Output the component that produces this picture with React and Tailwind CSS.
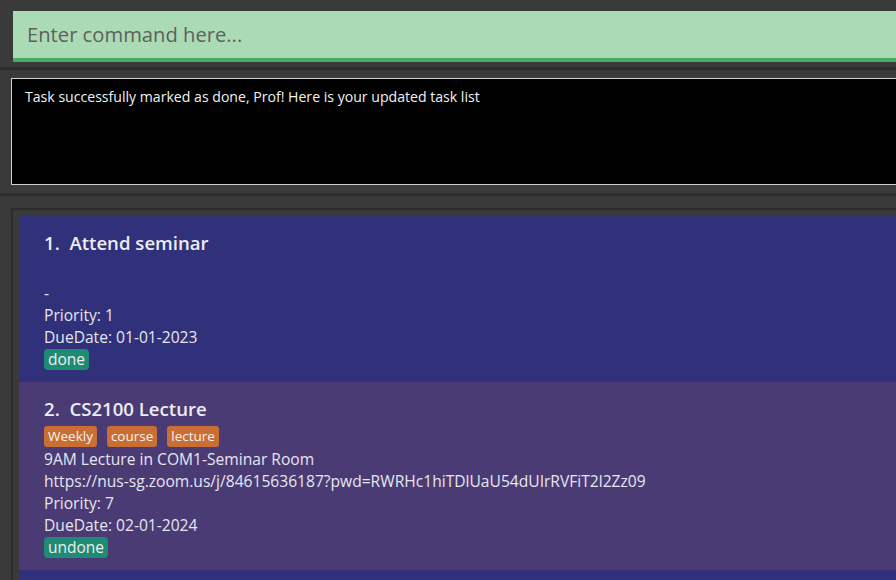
import React from "react";

const FONT = { fontFamily: '"Open Sans", "Noto Sans", sans-serif' };

function Tag({ children }) {
  return (
    <span className="inline-flex h-[21px] items-center rounded-[3px] bg-[#c96f33] px-[4px] text-[13.5px] text-[#f3f3f3]">
      {children}
    </span>
  );
}

function Status({ children }) {
  return (
    <div className="mt-[1px] flex h-[21px]">
      <span className="inline-flex h-[21px] items-center rounded-[4px] bg-[#1f8b74] px-[4px] text-[15.5px] text-[#eeeeee]">
        {children}
      </span>
    </div>
  );
}

function Card({ bg, index, title, tags, lines, status }) {
  return (
    <div className={`${bg} px-[25px] pt-[13px] pb-[12px] text-[#e6e6ee]`}>
      <div className="h-[28px] text-[18.6px] font-semibold leading-[28px] text-[#ececf4]">
        {index}.&nbsp;&nbsp;{title}
      </div>
      <div className="mt-[3px] mb-[1px] flex h-[21px] gap-[10px]">
        {tags.map((t) => (
          <Tag key={t}>{t}</Tag>
        ))}
      </div>
      {lines.map((l, i) => (
        <div key={i} className="h-[22px] whitespace-nowrap text-[15.6px] leading-[22px]">
          {l}
        </div>
      ))}
      <Status>{status}</Status>
    </div>
  );
}

export default function App() {
  return (
    <div className="h-[580px] w-[896px] overflow-hidden bg-[#3a3a3a]" style={FONT}>
      {/* command box */}
      <div className="pt-[11px] pl-[13px]">
        <div className="flex h-[51px] items-center border-b-[4px] border-[#4cab5e] bg-[#abdbb5] pl-[14px] text-[20.2px] text-[#5c625c]">
          Enter command here...
        </div>
      </div>
      <div className="mt-[5px] h-[3px] bg-[#2e2e2e]" />
      {/* result display */}
      <div className="pt-[8px] pl-[11px]">
        <div className="h-[107px] border border-r-0 border-[#cfcfcf] bg-black px-[13px] pt-[8px] text-[14.1px] leading-[20px] text-[#f2f2f2]">
          Task successfully marked as done, Prof! Here is your updated task list
        </div>
      </div>
      <div className="mt-[8px] h-[3px] bg-[#2e2e2e]" />
      {/* list panel */}
      <div className="mt-[12px] ml-[11px] h-[400px] border-t-[2px] border-l-[2px] border-[#2c2c2c] pt-[6px] pl-[6px]">
        <Card
          bg="bg-[#30317a]"
          index={1}
          title="Attend seminar"
          tags={[]}
          lines={["-", "Priority: 1", "DueDate: 01-01-2023"]}
          status="done"
        />
        <Card
          bg="bg-[#4b3b75]"
          index={2}
          title="CS2100 Lecture"
          tags={["Weekly", "course", "lecture"]}
          lines={[
            "9AM Lecture in COM1-Seminar Room",
            "https://nus-sg.zoom.us/j/84615636187?pwd=RWRHc1hiTDlUaU54dUIrRVFiT2l2Zz09",
            "Priority: 7",
            "DueDate: 02-01-2024",
          ]}
          status="undone"
        />
        <div className="h-[40px] bg-[#30317a]" />
      </div>
    </div>
  );
}
